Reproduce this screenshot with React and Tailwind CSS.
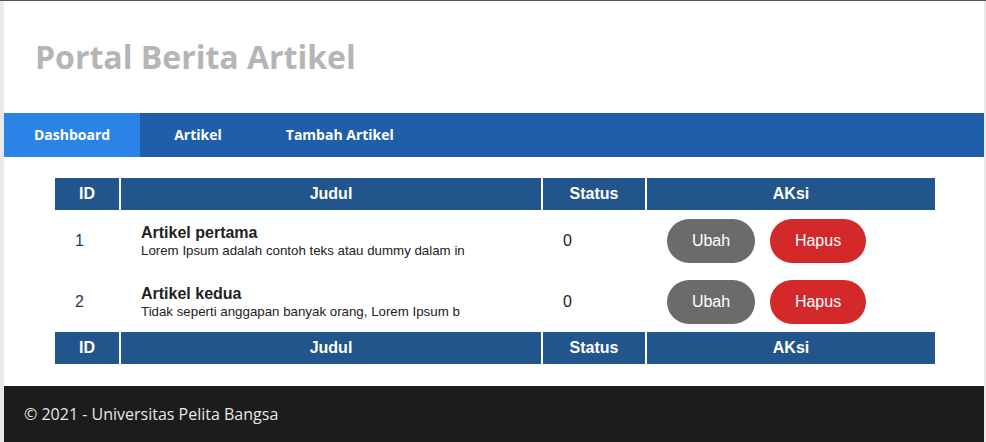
const articles = [
  { id: 1, title: 'Artikel pertama', desc: 'Lorem Ipsum adalah contoh teks atau dummy dalam in', status: 0 },
  { id: 2, title: 'Artikel kedua', desc: 'Tidak seperti anggapan banyak orang, Lorem Ipsum b', status: 0 },
]

const nav = ['Dashboard', 'Artikel', 'Tambah Artikel']

function HeadRow() {
  return (
    <tr className="h-8 bg-[#22558c] text-white font-bold text-base">
      <th className="w-[65px] text-center font-bold">ID</th>
      <th className="w-[422px] text-center font-bold border-l-2 border-white">Judul</th>
      <th className="w-[104px] text-center font-bold border-l-2 border-white">Status</th>
      <th className="text-center font-bold border-l-2 border-white">AKsi</th>
    </tr>
  )
}

export default function App() {
  return (
    <div className="min-h-screen bg-[#e9e9e9] border-t border-[#555555] pl-1 pr-[2px]" style={{ fontFamily: '"Liberation Sans", Arial, sans-serif' }}>
      <div className="bg-white">
        <header className="h-28 flex items-center px-[31px]">
          <h1 className="text-[32px] font-bold text-[#b5b5b5] mt-[-1px]" style={{ fontFamily: '"Open Sans", sans-serif' }}>
            Portal Berita Artikel
          </h1>
        </header>

        <nav className="h-11 bg-[#1f5fa9] flex gap-1" style={{ fontFamily: '"Open Sans", sans-serif' }}>
          {nav.map((label, i) => (
            <a
              key={label}
              href="#"
              className={`px-[30px] flex items-center text-sm font-bold text-white ${i === 0 ? 'bg-[#2b83e6]' : ''}`}
            >
              {label}
            </a>
          ))}
        </nav>

        <main className="pt-[21px] pb-[22px]">
          <table className="w-[880px] ml-[51px] border-collapse text-[#222222]">
            <thead>
              <HeadRow />
            </thead>
            <tbody>
              {articles.map((a) => (
                <tr key={a.id} className="h-[61px]">
                  <td className="pl-5 text-base text-[#1f3566]">{a.id}</td>
                  <td className="pl-[21px] pt-[1px]">
                    <p className="text-base font-bold leading-tight">{a.title}</p>
                    <p className="text-[13.3px] leading-tight">{a.desc}</p>
                  </td>
                  <td className="pl-[21px] text-base">{a.status}</td>
                  <td className="pl-[21px]">
                    <div className="flex gap-[15px]">
                      <button className="w-[88px] h-11 rounded-[22px] bg-[#6b6c6a] text-white text-base">Ubah</button>
                      <button className="w-24 h-11 rounded-[22px] bg-[#d4292b] text-white text-base">Hapus</button>
                    </div>
                  </td>
                </tr>
              ))}
            </tbody>
            <tfoot>
              <HeadRow />
            </tfoot>
          </table>
        </main>

        <footer className="h-14 bg-[#1c1c1c] flex items-center px-5 text-base text-[#e6e6e6]" style={{ fontFamily: '"Open Sans", sans-serif' }}>
          © 2021 - Universitas Pelita Bangsa
        </footer>
      </div>
    </div>
  )
}
